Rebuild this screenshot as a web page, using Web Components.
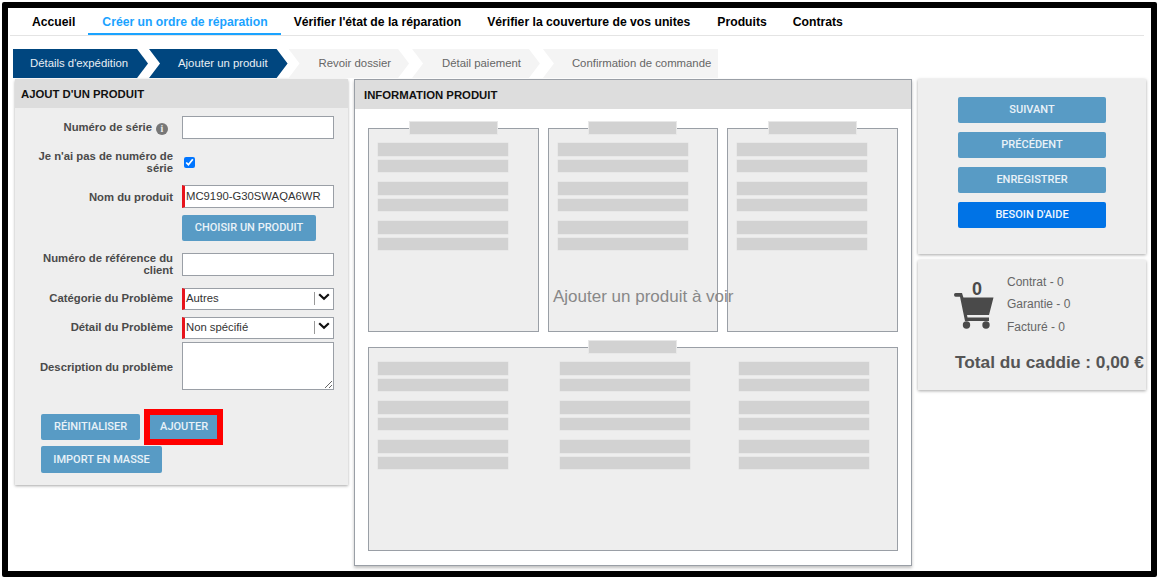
<!DOCTYPE html>
<html lang="fr"><head><meta charset="utf-8"><title>Ajout d'un produit</title>
<style>
html,body{margin:0;padding:0;background:#fff;overflow:hidden}
body{font-family:"Liberation Sans",Arial,sans-serif}
</style></head><body>
<x-frame>
  <x-nav>
    <x-nav-item>Accueil</x-nav-item>
    <x-nav-item active>Créer un ordre de réparation</x-nav-item>
    <x-nav-item>Vérifier l'état de la réparation</x-nav-item>
    <x-nav-item style="padding-right:14px">Vérifier la couverture de vos unites</x-nav-item>
    <x-nav-item>Produits</x-nav-item>
    <x-nav-item>Contrats</x-nav-item>
  </x-nav>
  <x-steps>
    <x-step state="first">Détails d'expédition</x-step>
    <x-step state="done">Ajouter un produit</x-step>
    <x-step style="padding-right:18px">Revoir dossier</x-step>
    <x-step>Détail paiement</x-step>
    <x-step state="last">Confirmation de commande</x-step>
  </x-steps>
  <x-main>
    <x-form-panel slot="left"></x-form-panel>
    <x-info-panel slot="mid"></x-info-panel>
    <x-action-panel slot="right"></x-action-panel>
    <x-cart-panel slot="right"></x-cart-panel>
  </x-main>
</x-frame>
<script>
function def(name, css, html){
  customElements.define(name, class extends HTMLElement{
    constructor(){super();const s=this.attachShadow({mode:'open'});
      s.innerHTML='<style>'+css+'</style>'+(typeof html==='function'?html(this):html);}
  });
}
def('x-frame',`:host{display:block;box-sizing:border-box;width:1155px;height:575px;margin:2px;border:6px solid #000;border-radius:2px;background:#fff;overflow:hidden;position:relative;font-family:"Liberation Sans",Arial,sans-serif}`,`<slot></slot>`);
def('x-nav',`:host{display:flex;margin:0 2px;width:1134px;border-bottom:1px solid #e4e4e4;padding-left:9px;box-sizing:border-box;height:28px}`,`<slot></slot>`);
def('x-nav-item',`:host{display:block;box-sizing:border-box;height:27px;padding:6.5px 13px 0;font:bold 12.2px/14px "Liberation Sans",Arial,sans-serif;color:#000;white-space:nowrap}
:host([active]){color:#1aa3ff;border-bottom:2px solid #1aa3ff;padding:6.5px 13px 0 14px}`,`<slot></slot>`);
def('x-steps',`:host{display:flex;margin:13px 0 1px 5px;height:29px}`,`<slot></slot>`);
def('x-step',`:host{display:block;box-sizing:border-box;height:29px;margin-right:3px;padding:0 19px 0 30px;background:#f4f4f4;color:#666;font:11.35px/29.5px "Liberation Sans",Arial,sans-serif;white-space:nowrap;
clip-path:polygon(0 0,calc(100% - 11px) 0,100% 50%,calc(100% - 11px) 100%,0 100%,11px 50%)}
:host([state=first]){background:#00467f;color:#e8eef4;padding:0 20px 0 17px;margin-right:1px;clip-path:polygon(0 0,calc(100% - 11px) 0,100% 50%,calc(100% - 11px) 100%,0 100%)}
:host([state=done]){background:#00467f;color:#e8eef4;padding:0 20px 0 29px;margin-right:1px}
:host([state=last]){padding:0 7px 0 29px;margin-right:0;clip-path:polygon(0 0,100% 0,100% 100%,0 100%,11px 50%)}`,`<slot></slot>`);
def('x-main',`:host{display:block;margin-left:7px}
.row{display:flex;gap:6px;align-items:flex-start}
.r{display:flex;flex-direction:column;gap:6px;width:228px}`,`<div class="row"><slot name="left"></slot><slot name="mid"></slot><div class="r"><slot name="right"></slot></div></div>`);
def('x-btn',`:host{display:inline-block;box-sizing:border-box;height:26px;padding:0 13px;background:#589bc5;color:#e9f2f8;border-radius:2px;font:500 11px/25px Roboto,"Liberation Sans",sans-serif;text-align:center;white-space:nowrap}
:host([help]){background:#0073e6;color:#eef6ff}
:host([marked]){height:24px;line-height:23px;border-radius:0;outline:6px solid #f00;padding:0 9px 0 10px}
:host([full]){display:block;width:148px;padding:0}`,`<slot></slot>`);
def('x-field',`:host{display:grid;grid-template-columns:143px 152px;column-gap:9px;align-items:center}
.l{font:bold 11.3px/12px "Liberation Sans",Arial,sans-serif;color:#4a4a4a;text-align:right}`,
`<div class="l"><slot name="label"></slot></div><div class="c"><slot></slot></div>`);
def('x-input',`:host{display:block;box-sizing:border-box;height:23px;background:#fff;border:1px solid #9a9fa6;font:11.3px/21px "Liberation Sans",Arial,sans-serif;color:#333;padding-left:3px;white-space:nowrap;overflow:hidden}
:host([req]){border-left:3px solid #e8141c;padding-left:1px}`,`<slot></slot>`);
def('x-select',`:host{display:flex;box-sizing:border-box;height:22px;background:#fff;border:1px solid #9a9fa6;border-left:3px solid #e8141c;font:11.3px/19px "Liberation Sans",Arial,sans-serif;color:#333;padding-left:1px}
.t{flex:1}.a{width:19px;display:flex;align-items:center;justify-content:center;position:relative;top:-2px}
.a::before{content:"";position:absolute;left:0;top:5px;height:13px;border-left:1px solid #999}`,
`<span class="t"><slot></slot></span><span class="a"><svg width="12" height="8" viewBox="0 0 12 8"><path d="M1.2 1.2 6 5.800l4.800-4.600" fill="none" stroke="#111" stroke-width="2.200"/></svg></span>`);
def('x-form-panel',`:host{display:block;box-sizing:border-box;width:333px;height:406px;background:#eee;box-shadow:0 1px 3px rgba(0,0,0,.35);border-radius:2px 2px 0 0}
h2{margin:0;height:29px;background:#ddd;padding-left:6px;font:bold 11.35px/30px "Liberation Sans",Arial,sans-serif;color:#111}
.b{padding:8px 0 0 15px;display:flex;flex-direction:column}
.i{display:inline-block;width:12px;height:12px;border-radius:50%;background:#777;color:#eee;font:bold 10px/12px "Liberation Serif",serif;text-align:center;margin-left:4px;margin-right:5px;vertical-align:-1px}
input[type=checkbox]{margin:0 0 0 2px;width:11px;height:11px;display:block}
textarea{display:block;box-sizing:border-box;width:152px;height:48px;margin:0;border:1px solid #9a9fa6;border-radius:0;background:#fff;padding:2px}
.cb{height:23px;display:flex;align-items:center}
.up{display:block;padding-bottom:2px}.dn{display:block;padding-top:2px}
.btns{display:flex;flex-wrap:wrap;margin:24px 0 0 11px;width:200px}
.btns .gap{margin-left:10px;margin-top:1px}
.btns .w{flex-basis:100%;margin-top:6px}`,
`<h2>AJOUT D'UN PRODUIT</h2><div class="b">
<x-field><span slot="label">Numéro de série<span class="i">i</span></span><x-input></x-input></x-field>
<x-field style="margin-top:11px"><span slot="label">Je n'ai pas de numéro de série</span><div class="cb"><input type="checkbox" checked aria-label="Je n'ai pas de numéro de série"></div></x-field>
<x-field style="margin-top:11px"><span slot="label">Nom du produit</span><x-input req>MC9190-G30SWAQA6WR</x-input></x-field>
<x-field style="margin-top:7px"><span slot="label"></span><x-btn style="width:134px;padding:0">CHOISIR UN PRODUIT</x-btn></x-field>
<x-field style="margin-top:11px"><span slot="label">Numéro de référence du client</span><x-input></x-input></x-field>
<x-field style="margin-top:12px"><span slot="label" class="up">Catégorie du Problème</span><x-select>Autres</x-select></x-field>
<x-field style="margin-top:7px"><span slot="label" class="up">Détail du Problème</span><x-select>Non spécifié</x-select></x-field>
<x-field style="margin-top:3px"><span slot="label" class="dn">Description du problème</span><textarea aria-label="Description du problème"></textarea></x-field>
<div class="btns"><x-btn>RÉINITIALISER</x-btn><x-btn marked class="gap">AJOUTER</x-btn><x-btn class="w" style="flex:none;width:121px;padding:0;height:27px;line-height:27px">IMPORT EN MASSE</x-btn></div>
</div>`);
def('x-sketch',`:host{display:block;box-sizing:border-box;height:204px;background:#eee;border:1px solid #9a9fa6;position:relative;padding:14px 0 0 9px}
.tab{position:absolute;top:-7px;left:50%;margin-left:-44px;width:87px;height:12px;background:#d2d2d2;box-shadow:0 0 0 1px #e8e8e8}
.cols{display:flex}.col{display:flex;flex-direction:column}
.bar{width:130px;height:12.5px;background:#d2d2d2;margin-bottom:4px;box-shadow:0 0 0 .5px #e2e2e2}
.bar:nth-child(2n){margin-bottom:10px}`,
el=>{const w=(el.getAttribute('cols')||'').split(',').filter(Boolean);
  const n=w.length||1;let h='<div class="tab"></div><div class="cols">';
  for(let i=0;i<n;i++){h+='<div class="col" style="width:'+(w[i]||130)+'px">';for(let k=0;k<6;k++)h+='<div class="bar"></div>';h+='</div>';}
  return h+'</div>';});
def('x-info-panel',`:host{display:block;box-sizing:border-box;width:558px;height:487px;background:#fff;border:1px solid #9a9fa6;box-shadow:0 2px 3px rgba(0,0,0,.25);position:relative}
h2{margin:0;height:29px;background:#ddd;padding-left:9px;font:bold 11.35px/31px "Liberation Sans",Arial,sans-serif;color:#111}
.g{display:grid;grid-template-columns:171px 170px 171px;column-gap:9px;padding:19px 0 0 13px}
.big{margin:15px 0 0 13px;width:530px}
.msg{position:absolute;left:198px;top:207px;font:17px/20px "Liberation Sans",Arial,sans-serif;color:#888;white-space:nowrap}`,
`<h2>INFORMATION PRODUIT</h2><div class="g"><x-sketch></x-sketch><x-sketch></x-sketch><x-sketch></x-sketch></div><x-sketch class="big" cols="182,179,130"></x-sketch><div class="msg">Ajouter un produit à voir</div>`);
def('x-action-panel',`:host{display:flex;flex-direction:column;gap:9px;box-sizing:border-box;width:228px;height:175px;background:#eee;box-shadow:0 1px 3px rgba(0,0,0,.35);padding:18px 0 0 40px}`,
`<x-btn full>SUIVANT</x-btn><x-btn full>PRÉCÉDENT</x-btn><x-btn full>ENREGISTRER</x-btn><x-btn full help>BESOIN D'AIDE</x-btn>`);
def('x-cart-panel',`:host{display:block;box-sizing:border-box;width:228px;height:130px;background:#eee;box-shadow:0 1px 3px rgba(0,0,0,.35);padding:15px 0 0 36px;color:#555}
.top{display:flex}
.ic{width:53px;position:relative;height:53px}
.ic b{position:absolute;left:18px;top:6px;font:bold 18px/16px "Liberation Sans",Arial,sans-serif;color:#4a4a4a}
.ic svg{position:absolute;left:0;top:18px}
.li{font:12px/22.4px "Liberation Sans",Arial,sans-serif;color:#666;margin-top:-4px}
.li div{white-space:nowrap}
.tot{margin:13px 0 0 1px;font:bold 17.3px/22px "Liberation Sans",Arial,sans-serif;color:#555;white-space:nowrap}`,
`<div class="top"><div class="ic"><b>0</b><svg width="40" height="36" viewBox="0 0 40 36"><path fill="#4a4a4a" d="M1.600 0H8l1.400 4.500h30.100L35 22H13l.5 2.500H35V28H11L6 3.700H1.600Q0 3.700 0 1.800 0 0 1.600 0z"/><circle cx="12.500" cy="32" r="3.700" fill="#4a4a4a"/><circle cx="32" cy="32" r="3.700" fill="#4a4a4a"/></svg></div>
<div class="li"><div>Contrat - 0</div><div>Garantie - 0</div><div>Facturé - 0</div></div></div>
<div class="tot">Total du caddie : 0,00 €</div>`);
</script>
</body></html>
